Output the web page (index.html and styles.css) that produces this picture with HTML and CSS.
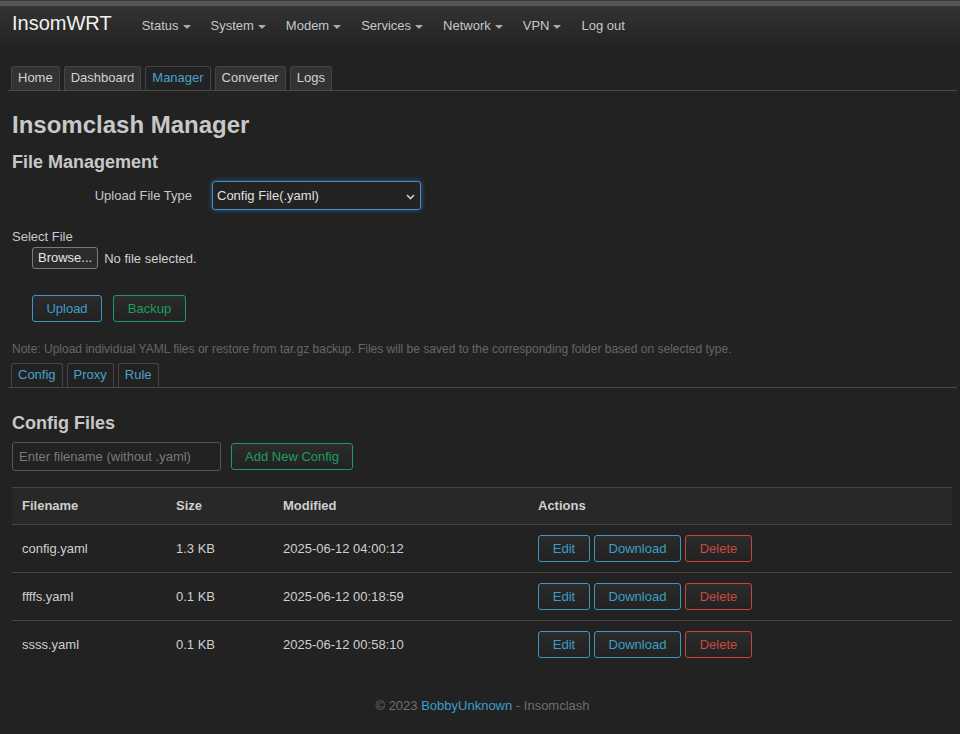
FILE: index.html
```html
<!DOCTYPE html>
<html>
<head>
<meta charset="utf-8">
<title>InsomWRT</title>
<link rel="stylesheet" href="styles.css">
</head>
<body>
<header class="navbar">
  <a class="brand">InsomWRT</a>
  <nav class="menu">
    <span class="item">Status <i class="caret"></i></span>
    <span class="item">System <i class="caret"></i></span>
    <span class="item">Modem <i class="caret"></i></span>
    <span class="item">Services <i class="caret"></i></span>
    <span class="item">Network <i class="caret"></i></span>
    <span class="item">VPN <i class="caret"></i></span>
    <span class="item">Log out</span>
  </nav>
</header>
<main class="main">
  <ul class="tabs top-tabs">
    <li class="tab">Home</li>
    <li class="tab">Dashboard</li>
    <li class="tab active">Manager</li>
    <li class="tab">Converter</li>
    <li class="tab">Logs</li>
  </ul>
  <div class="content">
    <h1 class="title">Insomclash Manager</h1>
    <h2 class="subtitle">File Management</h2>
    <div class="field">
      <label class="field-label">Upload File Type</label>
      <div class="select">
        <span>Config File(.yaml)</span>
        <svg class="chev" width="9" height="6" viewBox="0 0 9 6"><path d="M1 1 L4.5 4.5 L8 1" fill="none" stroke="#ccc" stroke-width="1.6"/></svg>
      </div>
    </div>
    <div class="select-file">Select File</div>
    <div class="file-row">
      <span class="browse">Browse...</span>
      <span class="nofile">No file selected.</span>
    </div>
    <div class="btn-row">
      <span class="btn blue upload">Upload</span>
      <span class="btn green backup">Backup</span>
    </div>
    <p class="note">Note: Upload individual YAML files or restore from tar.gz backup. Files will be saved to the corresponding folder based on selected type.</p>
  </div>
  <ul class="tabs sub-tabs">
    <li class="tab blue-text active">Config</li>
    <li class="tab blue-text active">Proxy</li>
    <li class="tab blue-text active">Rule</li>
  </ul>
  <div class="content">
    <h2 class="subtitle files-title">Config Files</h2>
    <div class="add-row">
      <div class="input">Enter filename (without .yaml)</div>
      <span class="btn green add">Add New Config</span>
    </div>
    <table class="table">
      <thead>
        <tr><th class="c1">Filename</th><th class="c2">Size</th><th class="c3">Modified</th><th>Actions</th></tr>
      </thead>
      <tbody>
        <tr>
          <td>config.yaml</td><td>1.3 KB</td><td>2025-06-12 04:00:12</td>
          <td class="actions"><span class="btn blue sm edit">Edit</span><span class="btn blue sm dl">Download</span><span class="btn red sm del">Delete</span></td>
        </tr>
        <tr>
          <td>ffffs.yaml</td><td>0.1 KB</td><td>2025-06-12 00:18:59</td>
          <td class="actions"><span class="btn blue sm edit">Edit</span><span class="btn blue sm dl">Download</span><span class="btn red sm del">Delete</span></td>
        </tr>
        <tr>
          <td>ssss.yaml</td><td>0.1 KB</td><td>2025-06-12 00:58:10</td>
          <td class="actions"><span class="btn blue sm edit">Edit</span><span class="btn blue sm dl">Download</span><span class="btn red sm del">Delete</span></td>
        </tr>
      </tbody>
    </table>
  </div>
  <footer class="footer">© 2023 <a class="link">BobbyUnknown</a> - Insomclash</footer>
</main>
</body>
</html>
```
FILE: styles.css
```css
* { box-sizing: border-box; }
html, body { margin: 0; padding: 0; }
body {
  background: #222222;
  color: #c8c8c8;
  font-family: "Liberation Sans", Arial, Helvetica, sans-serif;
  font-size: 13px;
  width: 960px;
  height: 734px;
  overflow: hidden;
  border-top: 1px solid #3a3a3a;
}
.navbar {
  border-top: 5px solid #565656;
  height: 49px;
  background: linear-gradient(#333333, #222222);
  display: flex;
  align-items: flex-start;
  padding-left: 12px;
}
.brand {
  font-size: 20px;
  color: #f0f0f0;
  line-height: 24px;
  margin-top: 5px;
}
.menu {
  display: flex;
  margin-left: 30px;
  margin-top: 12px;
}
.item {
  color: #c3c8cc;
  font-size: 13px;
  line-height: 16px;
  margin-right: 20px;
  display: inline-flex;
  align-items: center;
}
.caret {
  display: inline-block;
  width: 0; height: 0;
  border-left: 4px solid transparent;
  border-right: 4px solid transparent;
  border-top: 4px solid #aaa;
  margin-left: 4px;
  margin-top: 1px;
}
.main {
  padding: 0 3px 0 8px;
}
.tabs {
  list-style: none;
  margin: 0;
  padding: 0 0 0 3px;
  display: flex;
  gap: 4px;
  border-bottom: 1px solid #4a4a4a;
}
.top-tabs { margin-top: 16px; }
.tab {
  height: 24px;
  line-height: 22px;
  padding: 0 6px;
  background: #333333;
  border: 1px solid #454545;
  border-bottom: none;
  border-radius: 3px 3px 0 0;
  color: #d2d2d2;
  font-size: 13px;
}
.tab.active {
  background: #222222;
  color: #48a2c9;
}
.content { padding: 0 4px; }
.title {
  font-size: 24px;
  font-weight: bold;
  color: #c8c8c8;
  margin: 20px 0 0;
  line-height: 28px;
}
.subtitle {
  font-size: 18px;
  font-weight: bold;
  color: #c8c8c8;
  margin: 12px 0 0;
  line-height: 22px;
}
.field {
  display: flex;
  align-items: center;
  margin-top: 8px;
}
.field-label {
  width: 180px;
  text-align: right;
  color: #c8c8c8;
}
.select {
  margin-left: 20px;
  width: 209px;
  height: 29px;
  border: 1px solid #3d8ed4;
  border-radius: 3px;
  box-shadow: 0 0 5px rgba(61, 142, 212, 0.6);
  background: #232323;
  color: #e0e0e0;
  display: flex;
  align-items: center;
  justify-content: space-between;
  padding: 0 5px 0 4px;
}
.chev { margin-top: 2px; }
.select-file {
  margin-top: 20px;
  line-height: 14px;
}
.file-row {
  display: flex;
  align-items: center;
  margin-top: 3px;
  padding-left: 20px;
}
.browse {
  height: 22px;
  line-height: 20px;
  padding: 0 5px;
  border: 1px solid #7a7a7a;
  border-radius: 3px;
  background: #2b2b2b;
  color: #e6e6e6;
}
.nofile { margin-left: 6px; color: #d0d0d0; }
.btn-row {
  display: flex;
  gap: 11px;
  padding-left: 20px;
  margin-top: 26px;
}
.btn {
  display: inline-block;
  height: 27px;
  line-height: 25px;
  border: 1px solid;
  border-radius: 3px;
  background: linear-gradient(#2b2b2b, #222222);
  text-align: center;
  font-size: 13px;
}
.blue { color: #3c9ec8; border-color: #3a97c4; }
.green { color: #1e9e5e; border-color: #1d9b5c; }
.red { color: #cf4642; border-color: #c9433f; }
.upload { width: 70px; }
.backup { width: 73px; }
.note {
  margin: 20px 0 0;
  font-size: 12px;
  line-height: 14px;
  color: #666;
}
.sub-tabs { margin-top: 7px; }
.files-title { margin-top: 24px; }
.add-row {
  display: flex;
  align-items: center;
  margin-top: 8px;
  gap: 10px;
}
.input {
  width: 209px;
  height: 29px;
  line-height: 27px;
  border: 1px solid #555;
  border-radius: 3px;
  color: #7a7a7a;
  padding: 0 6px;
  background: #222;
}
.add { width: 122px; }
.table {
  width: 940px;
  border-collapse: collapse;
  margin-top: 16px;
}
.table th {
  text-align: left;
  font-weight: bold;
  background: #282828;
  height: 37px;
  padding: 0 10px 2px;
  border-top: 1px solid #444;
  border-bottom: 1px solid #444;
  color: #cfcfcf;
}
.table td {
  height: 48px;
  padding: 0 10px;
  color: #cfcfcf;
}
.table tbody tr + tr td { border-top: 1px solid #444; }
.c1 { width: 154px; }
.c2 { width: 107px; }
.c3 { width: 255px; }
.actions { font-size: 0; }
.sm { margin-right: 4px; }
.edit { width: 52px; }
.dl { width: 87px; }
.del { width: 67px; }
.footer {
  text-align: center;
  color: #6e6e6e;
  margin-top: 29px;
  font-size: 13px;
}
.link { color: #3c9ec8; }
```
